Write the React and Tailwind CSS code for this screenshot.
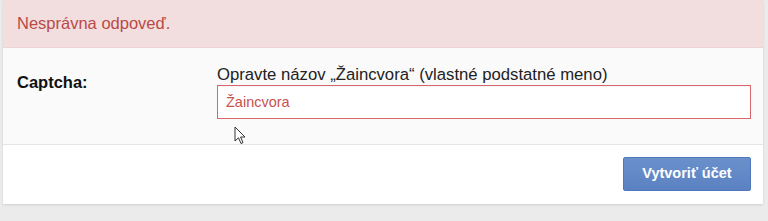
export default function App() {
  return (
    <div className="min-h-[221px] bg-[#ebebeb] font-['Liberation_Sans',Arial,sans-serif]">
      <div className="ml-[3px] w-[760px] bg-white shadow-[0_1px_2px_rgba(0,0,0,0.12)]">
        <div className="h-[48px] bg-[#f2dede] border-b border-[#eed3d7] pl-[14px] flex items-center text-[16.5px] text-[#b94a48]">
          Nesprávna odpoveď.
        </div>
        <div className="relative bg-[#fafafa] border-b border-[#e5e5e5] flex pt-[17px] pb-[25px] pl-[14px] pr-[12px]">
          <label className="w-[200px] shrink-0 pt-[5px] text-[16.5px] font-bold text-[#111]">Captcha:</label>
          <div className="flex-1">
            <p className="text-[16.7px] text-[#222] leading-[19px] mb-[1px]">
              Opravte názov „Žaincvora“ (vlastné podstatné meno)
            </p>
            <input
              type="text"
              defaultValue="Žaincvora"
              className="w-full h-[34px] bg-white border border-[#d9666a] px-[8px] text-[14.5px] text-[#c9514f] outline-none shadow-[inset_0_1px_1px_rgba(0,0,0,0.05)]"
            />
          </div>
          <svg className="absolute left-[231px] top-[78px]" width="13" height="20" viewBox="0 0 13 20">
            <path d="M1 1 L1 15 L4.5 11.8 L7 17.5 L9 16.6 L6.6 11 L11 11 Z" fill="#fff" stroke="#333" strokeWidth="1" strokeLinejoin="round" />
          </svg>
        </div>
        <div className="flex justify-end pt-[12px] pb-[13px] pr-[12px]">
          <button className="h-[34px] w-[128px] rounded-[2px] border border-[#4f78bb] bg-gradient-to-b from-[#6b91cc] to-[#5a81c1] text-white text-[14.5px] font-bold">
            Vytvoriť účet
          </button>
        </div>
      </div>
    </div>
  )
}
